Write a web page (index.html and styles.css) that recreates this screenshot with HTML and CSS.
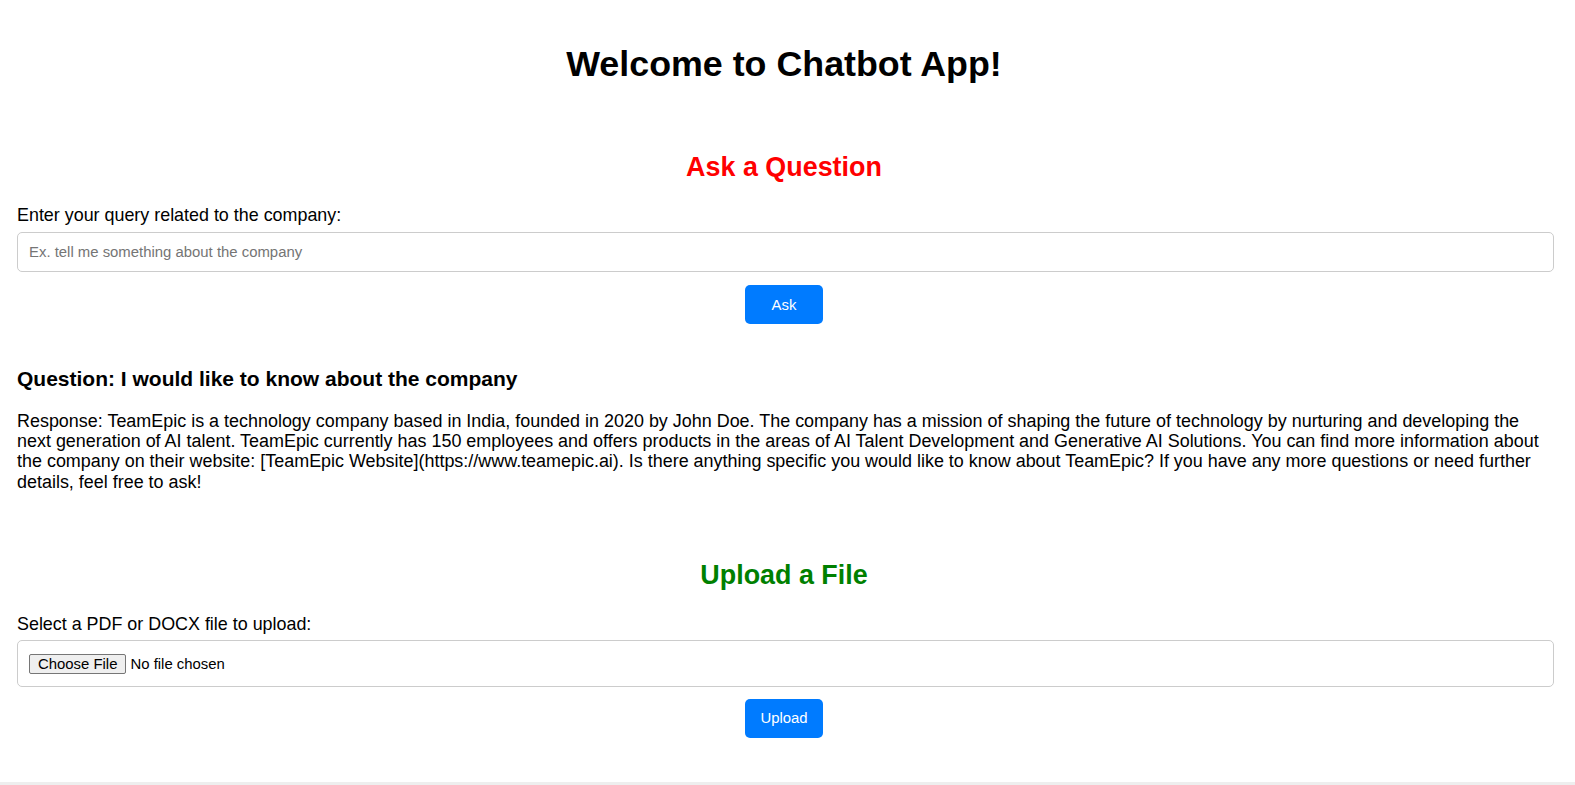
FILE: index.html
```html
<!DOCTYPE html>
<html lang="en">
<head>
<meta charset="utf-8">
<title>Chatbot App</title>
<link rel="stylesheet" href="styles.css">
</head>
<body>
<div class="page">
  <h1 class="title">Welcome to Chatbot App!</h1>

  <section class="ask">
    <h2 class="section-title red">Ask a Question</h2>
    <label class="field-label" for="q">Enter your query related to the company:</label>
    <input class="text-input" id="q" type="text" placeholder="Ex. tell me something about the company">
    <div class="btn-row"><button class="btn" type="button">Ask</button></div>
  </section>

  <section class="answer">
    <h3 class="question">Question: I would like to know about the company</h3>
    <p class="response">Response: TeamEpic is a technology company based in India, founded in 2020 by John Doe. The company has a mission of shaping the future of technology by nurturing and developing the<br>next generation of AI talent. TeamEpic currently has 150 employees and offers products in the areas of AI Talent Development and Generative AI Solutions. You can find more information about the company on their website: [TeamEpic Website](https://www.teamepic.ai). Is there anything specific you would like to know about TeamEpic? If you have any more questions or need further details, feel free to ask!</p>
  </section>

  <section class="upload">
    <h2 class="section-title green">Upload a File</h2>
    <label class="field-label second" for="f">Select a PDF or DOCX file to upload:</label>
    <div class="file-box"><input class="file-input" id="f" type="file"></div>
    <div class="btn-row second"><button class="btn" type="button">Upload</button></div>
  </section>
</div>
<div class="footer-strip"></div>
</body>
</html>
```

FILE: styles.css
```css
html, body {
  margin: 0;
  padding: 0;
  background: #ffffff;
  overflow: hidden;
}

body {
  font-family: Arial, "Liberation Sans", sans-serif;
  font-size: 17.9px;
  color: #000;
  height: 785px;
  display: flex;
  flex-direction: column;
}

.page {
  margin-left: 17px;
  width: 1537px;
  display: flex;
  flex-direction: column;
  flex: 1;
}

.title {
  margin: 44px 0 0;
  font-size: 35.8px;
  line-height: 40px;
  font-weight: bold;
  text-align: center;
  padding-right: 3px;
}

.section-title {
  margin: 0;
  font-size: 26.9px;
  line-height: 30px;
  font-weight: bold;
  text-align: center;
  padding-right: 3px;
}

.ask .section-title { margin-top: 68px; }
.upload .section-title { margin-top: 68px; }

.red { color: #ff0000; }
.green { color: #008000; }

.field-label {
  display: block;
  margin-top: 23px;
  line-height: 20px;
}

.field-label.second { margin-top: 24px; }

.text-input {
  display: block;
  box-sizing: border-box;
  width: 100%;
  height: 40px;
  margin-top: 7px;
  padding: 0 11px;
  border: 1px solid #cccccc;
  border-radius: 5px;
  font-family: Arial, "Liberation Sans", sans-serif;
  font-size: 14.9px;
  color: #000;
  outline: none;
}

.text-input::placeholder { color: #757575; }

.btn-row {
  display: flex;
  justify-content: center;
  margin-top: 13px;
  padding-right: 3px;
}

.btn-row.second { margin-top: 12px; }

.btn {
  width: 78px;
  height: 39px;
  border: none;
  border-radius: 5px;
  background: #007bff;
  color: #ffffff;
  font-family: Arial, "Liberation Sans", sans-serif;
  font-size: 14.9px;
  padding: 0;
  cursor: pointer;
}

.question {
  margin: 43px 0 0;
  font-size: 21px;
  line-height: 24px;
  font-weight: bold;
}

.response {
  margin: 20px 0 0;
  padding-right: 4px;
  font-size: 17.95px;
  line-height: 20.2px;
}

.file-box {
  box-sizing: border-box;
  height: 47px;
  margin-top: 6px;
  padding: 12px 11px 0;
  border: 1px solid #cccccc;
  border-radius: 5px;
}

.file-input {
  font-family: Arial, "Liberation Sans", sans-serif;
  font-size: 14.9px;
  color: #000;
  margin: 0;
}

.file-input::file-selector-button {
  font-family: Arial, "Liberation Sans", sans-serif;
  font-size: 14.9px;
  color: #000;
  background: #efefef;
  border: 1px solid #767676;
  border-radius: 2px;
  padding: 1px 8px;
  margin-right: 4px;
}

.footer-strip {
  height: 3px;
  background: #eeeeee;
  flex: none;
}
```
